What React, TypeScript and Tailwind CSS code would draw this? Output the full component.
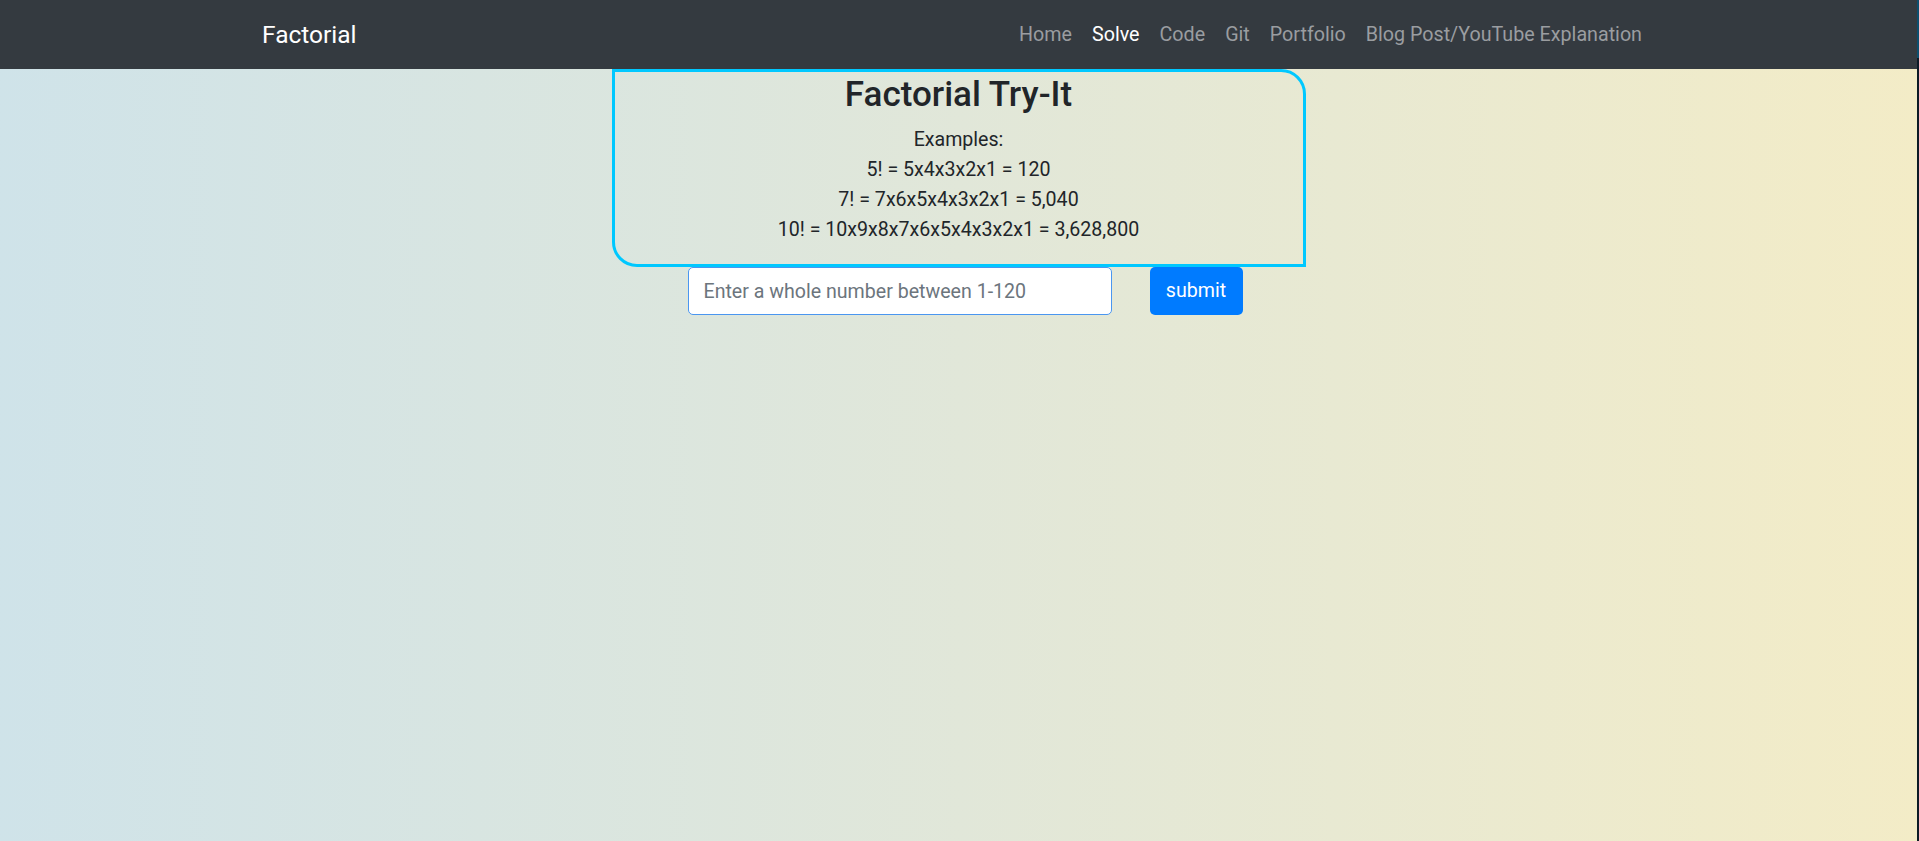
import React from "react";

const links = ["Home", "Solve", "Code", "Git", "Portfolio", "Blog Post/YouTube Explanation"];

const examples = [
  "Examples:",
  "5! = 5x4x3x2x1 = 120",
  "7! = 7x6x5x4x3x2x1 = 5,040",
  "10! = 10x9x8x7x6x5x4x3x2x1 = 3,628,800",
];

const App = () => {
  return (
    <div className="flex w-full min-h-[841px] font-['Segoe_UI','Roboto','Liberation_Sans',sans-serif] text-[#212529]">
      <div className="flex-1 bg-linear-to-r from-[#cfe3e9] via-[#e1e7d9] to-[#f3ecc7]">
        <nav className="h-[69px] bg-[#343a40] flex items-center">
          <div className="w-[1425px] mx-auto pl-[16px] pr-[19px] flex items-center justify-between">
            <a className="text-[24.5px] leading-[37px] text-white">Factorial</a>
            <ul className="flex items-center">
              {links.map((l) => (
                <li key={l}>
                  <a
                    className={
                      "px-[10px] text-[19.7px] leading-[30px] " +
                      (l === "Solve" ? "text-white" : "text-[#9a9da0]")
                    }
                  >
                    {l}
                  </a>
                </li>
              ))}
            </ul>
          </div>
        </nav>

        <div className="w-[694px] mx-auto border-[3px] border-[#00c8ff] rounded-tr-[25px] rounded-bl-[25px] pb-[19px] text-center">
          <h3 className="text-[35px] leading-[46px] font-medium mb-[7px]">Factorial Try-It</h3>
          {examples.map((e) => (
            <div key={e} className="text-[19.6px] leading-[30px]">
              {e}
            </div>
          ))}
        </div>

        <div className="w-[694px] mx-auto pl-[76px] flex items-center">
          <input
            className="w-[424px] h-[48px] bg-white border border-[#4a96f0] rounded-[5px] px-[15px] text-[19.6px] outline-none placeholder:text-[#6c757d]"
            placeholder="Enter a whole number between 1-120"
          />
          <button className="ml-[38px] w-[93px] h-[48px] bg-[#007bff] text-white text-[19.6px] rounded-[5px]">
            submit
          </button>
        </div>
      </div>
      <div className="w-[2px] flex flex-col">
        <div className="h-[58px] bg-[#0d4f6e]" />
        <div className="flex-1 bg-[#0b1a26]" />
      </div>
    </div>
  );
};

export default App;
